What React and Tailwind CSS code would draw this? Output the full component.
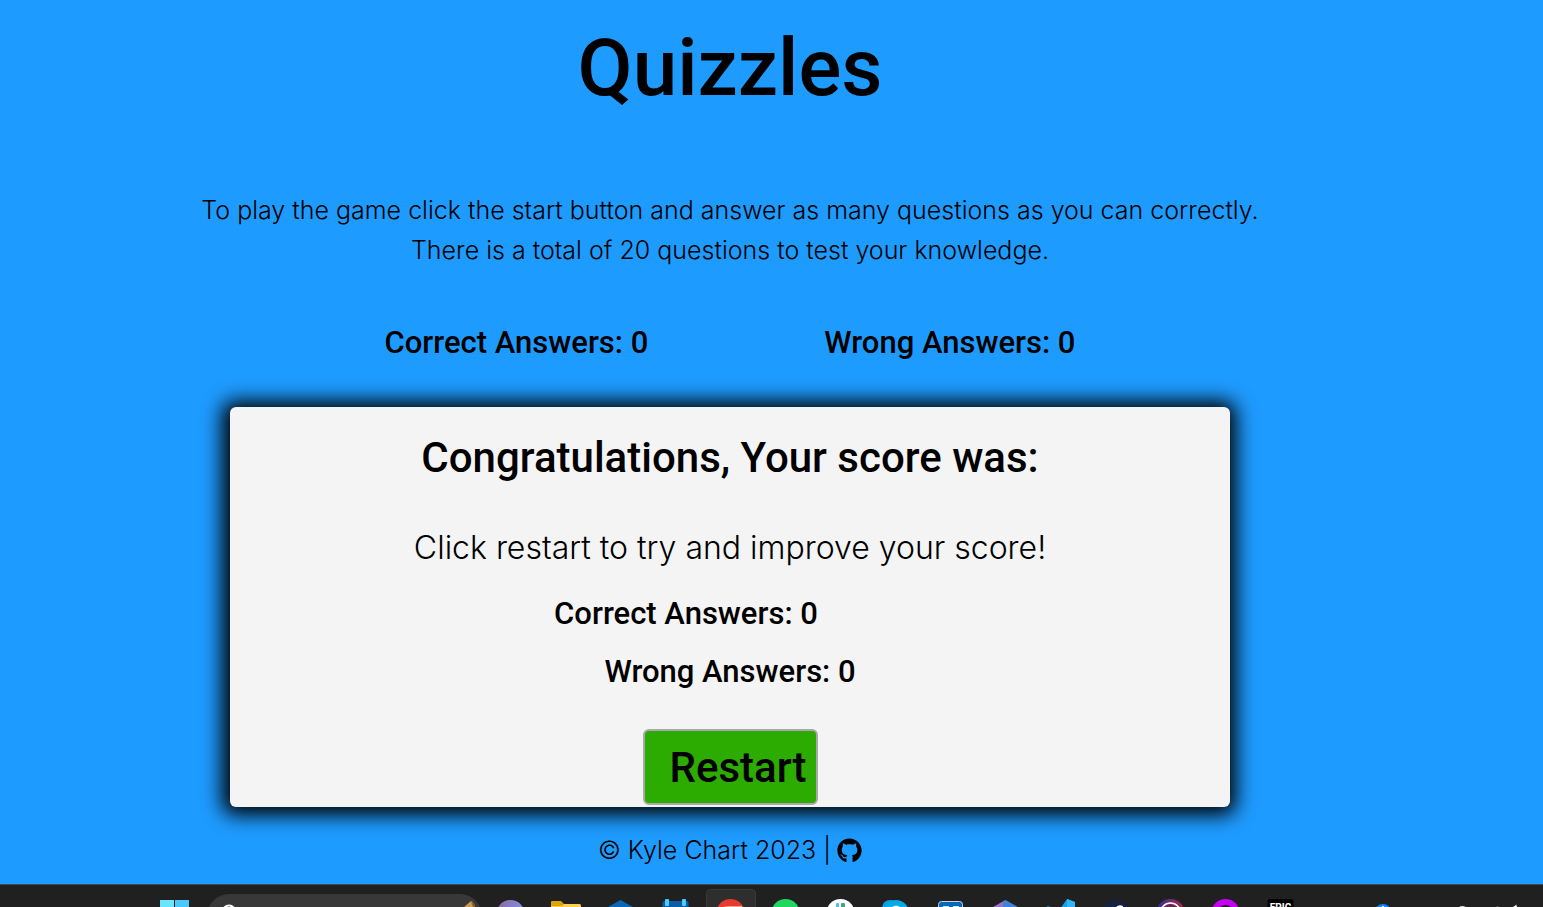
import { FaGithub } from "react-icons/fa";

const body = "font-['Inter','Liberation_Sans',sans-serif]";
const heading = "font-['Roboto','Liberation_Sans',sans-serif] font-medium";

function Slot({ children, active = false }) {
  return (
    <li className="flex h-[22px] w-[55px] shrink-0 justify-center">
      <svg viewBox="0 0 55 22" className="h-[22px] w-[55px]" aria-hidden="true">
        {active && (
          <rect x="3.5" y="4.5" width="49" height="40" rx="4" fill="#2e2e2e" stroke="#3a3a3a" />
        )}
        {children}
      </svg>
    </li>
  );
}

function Taskbar() {
  return (
    <nav aria-label="Taskbar" className="flex h-[23px] shrink-0 overflow-hidden border-t border-[#42484d] bg-[#202020] pl-[160px]">
      <svg viewBox="0 0 29 22" className="h-[22px] w-[29px] shrink-0" aria-hidden="true">
        <path d="M0 15h14v14H0z" fill="#6be4fc" />
        <path d="M15 15h14v14H15z" fill="#47c9fa" />
      </svg>
      <svg viewBox="0 0 276 22" className="ml-[18px] h-[22px] w-[276px] shrink-0" aria-hidden="true">
        <rect x="0" y="9" width="275" height="44" rx="22" fill="#383838" />
        <circle cx="22" cy="27" r="6.5" fill="none" stroke="#fff" strokeWidth="2" />
        <path d="M257 22l7-6 3 3 1 3z" fill="#c79a50" />
        <path d="M264 16l2 1 2 5h-2z" fill="#8b5f31" />
      </svg>
      <ul className="flex">
        <Slot>
          <defs>
            <linearGradient id="orb">
              <stop offset="0" stopColor="#8a6a9d" />
              <stop offset="1" stopColor="#838fe8" />
            </linearGradient>
          </defs>
          <circle cx="27.5" cy="29" r="14" fill="url(#orb)" />
        </Slot>
        <Slot>
          <path d="M13 17q0-1 1-1h9l3 3h15q2 0 2 2v8H13z" fill="#e0a30c" />
          <path d="M13 22v-1h11l2-2h15q2 0 2 2v2z" fill="#ffcf4d" />
        </Slot>
        <Slot>
          <path d="M27.5 15L40 22H15z" fill="#0a66b6" />
        </Slot>
        <Slot>
          <rect x="14.5" y="16" width="26" height="20" rx="2" fill="#0c5da8" />
          <rect x="17" y="14" width="4" height="7" rx="1" fill="#45cff7" />
          <rect x="34" y="14" width="4" height="7" rx="1" fill="#45cff7" />
        </Slot>
        <Slot active>
          <circle cx="27.5" cy="28" r="14" fill="#e63b2e" />
          <path d="M20 22q3-1 8-1h11v2H20z" fill="#f6a89b" />
        </Slot>
        <Slot>
          <circle cx="27.5" cy="28" r="14" fill="#20d760" />
        </Slot>
        <Slot>
          <circle cx="27.5" cy="28" r="14" fill="#fff" />
          <rect x="23" y="18" width="3" height="8" rx="1" fill="#4bc3ea" />
          <rect x="28" y="18" width="4" height="8" rx="1" fill="#36ad78" />
        </Slot>
        <Slot>
          <circle cx="22" cy="23" r="8" fill="#109bdf" />
          <circle cx="28" cy="28" r="13" fill="#08a9e9" />
          <path d="M24 22q4-3 8 0z" fill="#fff" />
        </Slot>
        <Slot>
          <rect x="15.5" y="16.5" width="24" height="20" rx="3" fill="#0869b9" stroke="#c5d4df" />
          <path d="M20 21h6v2h-6zM30 21h6v2h-6z" fill="#c6e5fa" />
        </Slot>
        <Slot>
          <path d="M27.5 15L15 22h12.5z" fill="#9871c8" />
          <path d="M27.5 15L40 22H25v-5z" fill="#3f83d9" />
        </Slot>
        <Slot>
          <path d="M34 14l8 3v7H27z" fill="#199ee3" />
          <path d="M34 14l8 3v7h-8z" fill="#30b6f5" />
          <path d="M13 22l2-1 3 1z" fill="#0d88c9" />
        </Slot>
        <Slot>
          <circle cx="27.5" cy="29" r="14" fill="#14213f" />
          <path d="M28 22q3-3 7-1v1z" fill="#fff" />
        </Slot>
        <Slot>
          <defs>
            <linearGradient id="ring">
              <stop offset="0" stopColor="#35309a" />
              <stop offset="1" stopColor="#a52a43" />
            </linearGradient>
          </defs>
          <circle cx="27.5" cy="28" r="14" fill="url(#ring)" />
          <circle cx="27.5" cy="28" r="10" fill="#6d2850" stroke="#fff" strokeWidth="1.5" />
        </Slot>
        <Slot>
          <circle cx="27.5" cy="28" r="11" fill="none" stroke="#c600f4" strokeWidth="6" />
        </Slot>
        <Slot>
          <rect x="14.5" y="14" width="26" height="20" rx="2" fill="#000" />
          <text x="27.5" y="26" textAnchor="middle" fill="#fff" className="font-['Roboto',sans-serif] text-[10px] font-bold">EPIC</text>
        </Slot>
      </ul>
      <svg viewBox="0 0 235 22" className="h-[22px] w-[235px] shrink-0" aria-hidden="true">
        <circle cx="75" cy="27" r="8" fill="#0a84ff" />
        <path d="M74 21h2v1h-2z" fill="#d9efff" />
        <path d="M151 22q3-2 7 0z" fill="#e5e5e5" />
        <path d="M188 22l2-1 1 1z" fill="#777" />
        <path d="M205 22l3-2v-1l1 3z" fill="#fff" />
      </svg>
    </nav>
  );
}

export default function App() {
  return (
    <div className={`flex min-h-screen flex-col overflow-x-hidden bg-[#1e9bff] text-black ${body}`}>
      <div className="flex grow flex-col items-center pr-[83px]">
        <header className="text-center">
          <h1 className={`pt-[16px] text-[80px] leading-[104px] ${heading}`}>Quizzles</h1>
          <p className="mt-[70px] px-4 text-[25px] leading-[40px] font-light">
            To play the game click the start button and answer as many questions as you can correctly.
            <br />
            There is a total of 20 questions to test your knowledge.
          </p>
        </header>
        <div className={`mt-[53px] flex justify-center gap-[176px] text-[31px] leading-[40px] ${heading}`}>
          <p>Correct Answers: 0</p>
          <p>Wrong Answers: 0</p>
        </div>
        <main className="mt-[44px] flex w-full max-w-[1000px] flex-col items-center rounded-md bg-[#f4f4f4] pt-[25px] pb-[2px] shadow-[-1px_1px_20px_7px_#000]">
          <h2 className={`text-[42px] leading-[52px] ${heading}`}>Congratulations, Your score was:</h2>
          <p className="mt-[42px] text-[32px] leading-[44px] font-light">Click restart to try and improve your score!</p>
          <p className={`mt-[24px] pr-[88px] text-[31px] leading-[40px] ${heading}`}>Correct Answers: 0</p>
          <p className={`mt-[18px] text-[31px] leading-[40px] ${heading}`}>Wrong Answers: 0</p>
          <button type="button" className={`mt-[37px] h-[76px] w-[175px] rounded-md border-2 border-[#a9a9a9] bg-[#2cab00] pl-[16px] text-[42px] ${heading}`}>
            Restart
          </button>
        </main>
        <footer className="mt-[24px] mb-[14px] flex items-center gap-[6px] text-[25px] leading-[38px] font-light">
          <span>© Kyle Chart 2023 |</span>
          <a href="https://github.com" aria-label="GitHub">
            <FaGithub className="size-[25px]" />
          </a>
        </footer>
      </div>
      <Taskbar />
    </div>
  );
}
